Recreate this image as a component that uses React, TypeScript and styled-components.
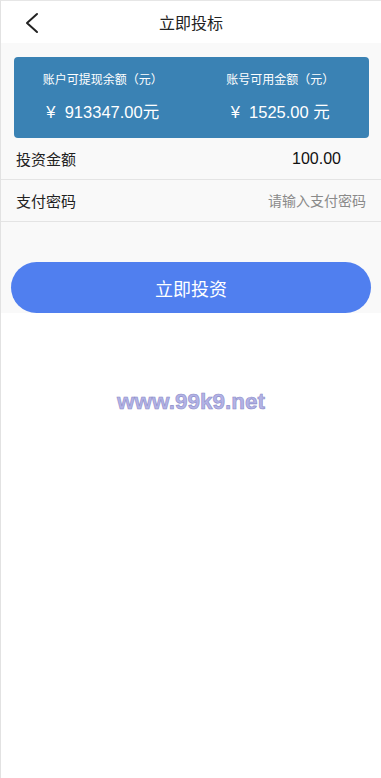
import React from 'react';
import styled, {createGlobalStyle} from 'styled-components';

const GlobalStyle = createGlobalStyle`
  html, body {
    margin: 0;
    padding: 0;
    background: #fff;
  }
  body {
    font-family: "Liberation Sans", "Noto Sans CJK SC", sans-serif;
    color: #222;
  }
  * {
    box-sizing: border-box;
  }
`;

type Balance = {
  label: string;
  value: string;
};

const balances: Balance[] = [
  {label: '账户可提现余额（元）', value: '¥  913347.00元'},
  {label: '账号可用金额（元）', value: '¥  1525.00 元'},
];

function BackIcon() {
  return (
    <svg width="16" height="22" viewBox="0 0 16 22" fill="none">
      <path d="M13 2 L3 11 L13 20" stroke="#222" strokeWidth="2" strokeLinecap="round" strokeLinejoin="round" />
    </svg>
  );
}

function App() {
  return (
    <>
      <GlobalStyle />
      <Page.Frame>
        <Header.Bar>
          <Header.Back>
            <BackIcon />
          </Header.Back>
          <Header.Title>立即投标</Header.Title>
        </Header.Bar>
        <Page.Body>
          <Card.Wrapper>
            {balances.map((b) => (
              <Card.Column key={b.label}>
                <Card.Label>{b.label}</Card.Label>
                <Card.Value>{b.value}</Card.Value>
              </Card.Column>
            ))}
          </Card.Wrapper>
          <Form.Row>
            <Form.Label>投资金额</Form.Label>
            <Form.Amount>100.00</Form.Amount>
          </Form.Row>
          <Form.Row>
            <Form.Label>支付密码</Form.Label>
            <Form.Input type="password" placeholder="请输入支付密码" />
          </Form.Row>
          <Submit.Wrapper>
            <Submit.Button>立即投资</Submit.Button>
          </Submit.Wrapper>
        </Page.Body>
        <Watermark>www.99k9.net</Watermark>
      </Page.Frame>
    </>
  );
}

export default App;

const Page = {
  Frame: styled.div`
    min-height: 778px;
    border-left: 1px solid #e2e2e2;
    border-top: 1px solid #e6e6e6;
    background: #fff;
  `,
  Body: styled.div`
    background: #f9f9f9;
    padding-top: 14px;
  `,
};

const Header = {
  Bar: styled.div`
    position: relative;
    height: 42px;
    display: flex;
    align-items: center;
    justify-content: center;
    background: #fff;
  `,
  Back: styled.div`
    position: absolute;
    left: 23px;
    top: 11px;
    display: flex;
  `,
  Title: styled.h1`
    margin: 0;
    font-size: 16px;
    font-weight: 400;
    color: #222;
  `,
};

const Card = {
  Wrapper: styled.div`
    margin: 0 12px 0 13px;
    height: 81px;
    border-radius: 4px;
    background: #3a82b4;
    display: flex;
    color: #fff;
  `,
  Column: styled.div`
    flex: 1;
    display: flex;
    flex-direction: column;
    align-items: center;
    padding-top: 15px;
  `,
  Label: styled.div`
    font-size: 12px;
    line-height: 16px;
  `,
  Value: styled.div`
    margin-top: 14px;
    font-size: 16.5px;
    line-height: 20px;
    white-space: pre;
  `,
};

const Form = {
  Row: styled.div`
    height: 42px;
    padding: 0 15px 0 15px;
    display: flex;
    align-items: center;
    justify-content: space-between;
    border-bottom: 1px solid #e4e4e4;
  `,
  Label: styled.span`
    font-size: 15px;
    color: #222;
  `,
  Amount: styled.span`
    font-size: 16px;
    color: #111;
    margin-right: 25px;
  `,
  Input: styled.input`
    width: 160px;
    border: none;
    background: transparent;
    outline: none;
    text-align: right;
    font-family: inherit;
    font-size: 14px;
    padding: 0;
    &::placeholder {
      color: #8a8a8a;
    }
  `,
};

const Submit = {
  Wrapper: styled.div`
    padding: 40px 10px 0 10px;
  `,
  Button: styled.button`
    width: 100%;
    height: 51px;
    border: none;
    border-radius: 26px;
    background: #507fef;
    color: #fff;
    font-family: inherit;
    font-size: 18px;
    cursor: pointer;
  `,
};

const Watermark = styled.div`
  margin-top: 76px;
  text-align: center;
  font-family: "Liberation Sans", Arial, sans-serif;
  font-weight: 700;
  font-size: 22.5px;
  color: #b3b3e6;
  -webkit-text-stroke: 0.6px #8c8cc8;
`;
